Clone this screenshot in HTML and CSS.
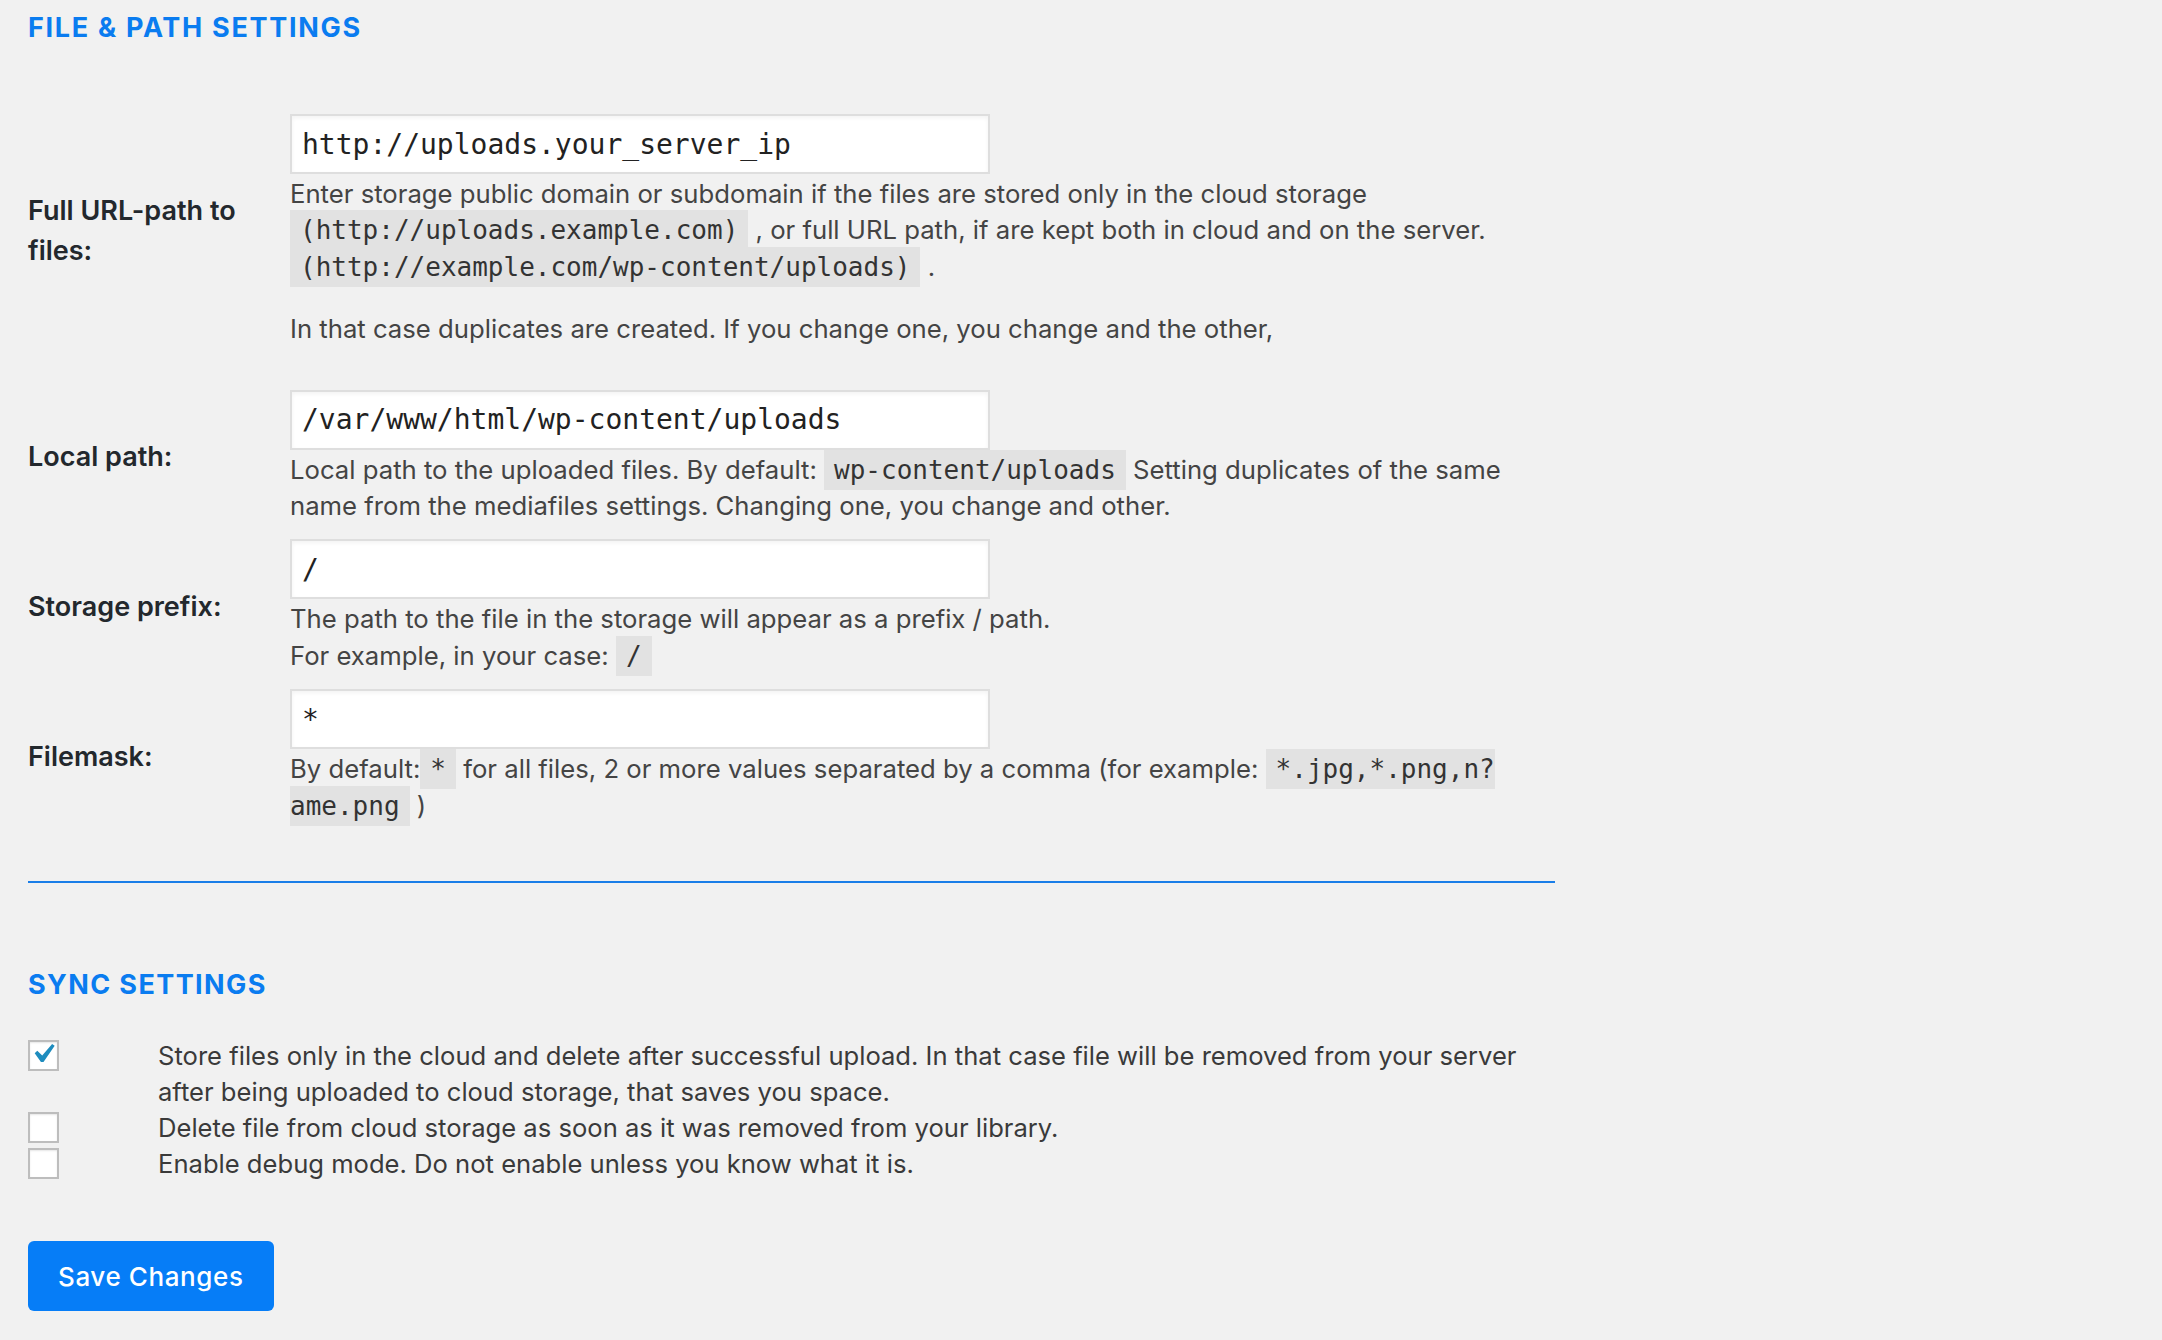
FILE: index.html
```html
<!DOCTYPE html>
<html lang="en">
<head>
<meta charset="utf-8">
<title>File &amp; Path Settings</title>
<link rel="stylesheet" href="styles.css">
</head>
<body>
<div class="wrap">
  <h2 class="section-title">FILE &amp; PATH SETTINGS</h2>

  <div class="form-table">
    <div class="row row--tall">
      <label class="row-label">Full URL-path to files:</label>
      <div class="row-field">
        <input class="text-input" type="text" value="http://uploads.your_server_ip">
        <p class="description">Enter storage public domain or subdomain if the files are stored only in the cloud storage <code>(http://uploads.example.com)</code> , or full URL path, if are kept both in cloud and on the server. <code>(http://example.com/wp-content/uploads)</code> .</p>
        <p class="description description--para">In that case duplicates are created. If you change one, you change and the other,</p>
      </div>
    </div>

    <div class="row">
      <label class="row-label">Local path:</label>
      <div class="row-field">
        <input class="text-input" type="text" value="/var/www/html/wp-content/uploads">
        <p class="description">Local path to the uploaded files. By default: <code>wp-content/uploads</code> Setting duplicates of the same name from the mediafiles settings. Changing one, you change and other.</p>
      </div>
    </div>

    <div class="row">
      <label class="row-label">Storage prefix:</label>
      <div class="row-field">
        <input class="text-input" type="text" value="/">
        <p class="description">The path to the file in the storage will appear as a prefix / path.<br>For example, in your case: <code>/</code></p>
      </div>
    </div>

    <div class="row">
      <label class="row-label">Filemask:</label>
      <div class="row-field">
        <input class="text-input" type="text" value="*">
        <p class="description">By default:<code>*</code> for all files, 2 or more values separated by a comma (for example: <code class="code--wrap">*.jpg,*.png,n?<wbr>ame.png</code> )</p>
      </div>
    </div>
  </div>

  <hr class="divider">

  <h2 class="section-title section-title--sync">SYNC SETTINGS</h2>

  <ul class="check-list">
    <li class="check-item">
      <span class="checkbox is-checked">
        <svg viewBox="3.34 3.85 14.03 14.03" width="27" height="27" aria-hidden="true"><path d="M14.83 4.89l1.34.94-5.81 8.38H9.02L5.78 9.67l1.34-1.25 2.57 2.4z" fill="#1e8cbe"/></svg>
      </span>
      <span class="check-text">Store files only in the cloud and delete after successful upload. In that case file will be removed from your server after being uploaded to cloud storage, that saves you space.</span>
    </li>
    <li class="check-item">
      <span class="checkbox"></span>
      <span class="check-text">Delete file from cloud storage as soon as it was removed from your library.</span>
    </li>
    <li class="check-item">
      <span class="checkbox"></span>
      <span class="check-text">Enable debug mode. Do not enable unless you know what it is.</span>
    </li>
  </ul>

  <button class="button-primary" type="button">Save Changes</button>
</div>
</body>
</html>
```
FILE: styles.css
```css
html, body {
  margin: 0;
  padding: 0;
  background: #f1f1f1;
}

body {
  font-family: "Inter", "Liberation Sans", sans-serif;
  color: #444;
}

.wrap {
  width: 1527px;
  padding: 10px 0 40px 28px;
}

.section-title {
  margin: 0 0 68px;
  font-family: "Inter", "Liberation Sans", sans-serif;
  font-size: 27px;
  line-height: 36px;
  font-weight: 700;
  letter-spacing: 1.7px;
  color: #0a7cf0;
}

.section-title--sync {
  margin: 84px 0 35px;
  letter-spacing: 1.4px;
}

.form-table {
  display: flex;
  flex-direction: column;
  gap: 15px;
  padding-right: 35px;
}

.row {
  display: flex;
  align-items: center;
}

.row--tall {
  margin-bottom: 27px;
}

.row-label {
  flex: 0 0 262px;
  box-sizing: border-box;
  padding-right: 24px;
  font-size: 27px;
  line-height: 40px;
  font-weight: 600;
  color: #23282d;
}

.row-field {
  flex: 1;
  min-width: 0;
}

.text-input {
  display: block;
  box-sizing: border-box;
  width: 700px;
  height: 60px;
  margin: 0;
  padding: 0 10px;
  border: 2px solid #dedede;
  background: #fff;
  box-shadow: inset 0 2px 4px rgba(0, 0, 0, 0.05);
  font-family: "DejaVu Sans Mono", "Liberation Mono", monospace;
  font-size: 28px;
  line-height: 40px;
  color: #222;
  outline: none;
}

.description {
  margin: 2px 0 0;
  font-size: 25.7px;
  line-height: 36.4px;
  color: #444;
}

.description--para {
  margin-top: 26px;
}

code {
  font-family: "DejaVu Sans Mono", "Liberation Mono", monospace;
  font-size: 26px;
  padding: 5px 10px 5px;
  background: #e2e2e2;
  color: #333;
  white-space: nowrap;
}

.code--wrap {
  white-space: normal;
}

.divider {
  margin: 57px 0 0;
  height: 2px;
  border: 0;
  background: #1a7ee8;
}

.check-list {
  margin: 0 0 59px;
  padding: 0;
  list-style: none;
}

.check-item {
  display: flex;
  align-items: flex-start;
  font-size: 25.6px;
  line-height: 36px;
  color: #3a3a3a;
}

.checkbox {
  flex: 0 0 31px;
  box-sizing: border-box;
  width: 31px;
  height: 31px;
  margin: 2px 99px 0 0;
  border: 2px solid #bdbdbd;
  background: #fff;
  box-shadow: inset 0 1px 2px rgba(0, 0, 0, 0.1);
  display: flex;
}

.checkbox svg {
  display: block;
}

.check-text {
  flex: 1;
}

.button-primary {
  display: block;
  height: 70px;
  padding: 0 30px;
  border: 0;
  border-radius: 6px;
  background: #067df7;
  color: #fff;
  font-family: "Inter", "Liberation Sans", sans-serif;
  font-size: 26px;
  font-weight: 500;
  letter-spacing: 0.6px;
  cursor: pointer;
}
```
